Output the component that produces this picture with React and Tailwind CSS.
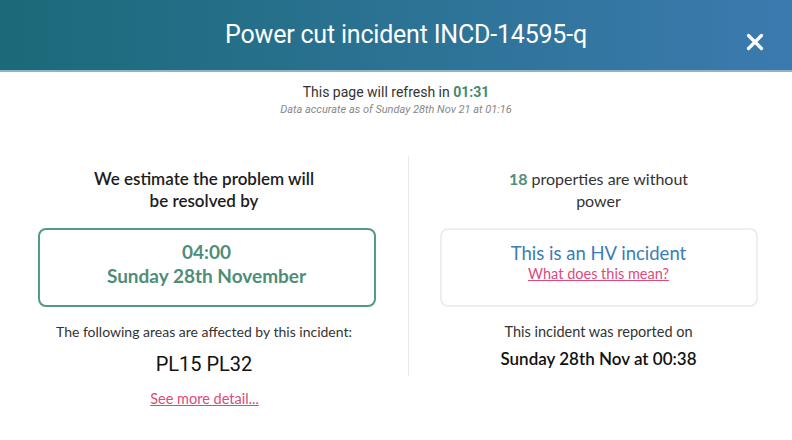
import React from "react";
import { X } from "lucide-react";

export default function App() {
  return (
    <div className="w-[792px] h-[440px] bg-white font-['Lato',sans-serif] text-[#222]">
      <header className="h-[72px] flex items-center justify-center relative bg-gradient-to-r from-[#1a6a79] to-[#3b7aaf] border-b-2 border-[#8fb4c4]">
        <h1 className="text-white text-[25px] font-['Roboto',sans-serif] tracking-[-0.2px] ml-[20px]">
          Power cut incident INCD-14595-q
        </h1>
        <button className="absolute right-[24px] top-[29px] text-white">
          <X size={26} strokeWidth={3} />
        </button>
      </header>

      <div className="flex flex-col items-center pt-[10px]">
        <p className="text-[14px] text-[#333] font-['Roboto',sans-serif]">
          This page will refresh in{" "}
          <span className="text-[#3f8a6e] font-bold">01:31</span>
        </p>
        <p className="text-[11px] italic text-[#888] font-['Roboto',sans-serif] mt-[-1px]">
          Data accurate as of Sunday 28th Nov 21 at 01:16
        </p>
      </div>

      <div className="flex mt-[37px]">
        <div className="w-[409px] flex flex-col items-center border-r border-[#eaeaea] pt-[12px]">
          <p className="text-[17px] font-semibold text-center leading-[22px] text-[#1c1c1c]">
            We estimate the problem will
            <br />
            be resolved by
          </p>
          <div className="mt-[16px] w-[338px] h-[79px] ml-[5px] shrink-0 border-2 border-[#549a80] rounded-[8px] flex flex-col items-center justify-center pb-[6px]">
            <p className="text-[19px] font-bold text-[#4e8e78] leading-[24px]">04:00</p>
            <p className="text-[19px] font-bold text-[#4e8e78] leading-[24px]">
              Sunday 28th November
            </p>
          </div>
          <p className="mt-[14px] text-[14px] text-[#333]">
            The following areas are affected by this incident:
          </p>
          <p className="mt-[10px] text-[20px] leading-[24px] font-['Roboto',sans-serif] text-[#111]">
            PL15 PL32
          </p>
        </div>
        <div className="flex-1 flex flex-col items-center pt-[12px]">
          <p className="text-[16px] text-center leading-[22px] text-[#333] ml-[-4px]">
            <span className="font-bold text-[#4e8e78]">18</span> properties are without
            <br />
            power
          </p>
          <div className="mt-[16px] w-[318px] h-[79px] ml-[-4px] border-2 border-[#eeeeee] rounded-[8px] flex flex-col items-center pt-[11px]">
            <p className="text-[18.5px] text-[#3a7db5] leading-[24px]">This is an HV incident</p>
            <a href="#" className="text-[14.5px] text-[#de4a7a] underline leading-[18px]">
              What does this mean?
            </a>
          </div>
          <p className="mt-[14px] text-[14.5px] text-[#333] ml-[-4px]">
            This incident was reported on
          </p>
          <p className="mt-[4px] text-[17px] font-semibold text-[#111] ml-[-4px]">
            Sunday 28th Nov at 00:38
          </p>
        </div>
      </div>
      <div className="flex w-[409px] justify-center mt-[12px]">
        <a href="#" className="text-[14.5px] text-[#de4a7a] underline">
          See more detail...
        </a>
      </div>
    </div>
  );
}
